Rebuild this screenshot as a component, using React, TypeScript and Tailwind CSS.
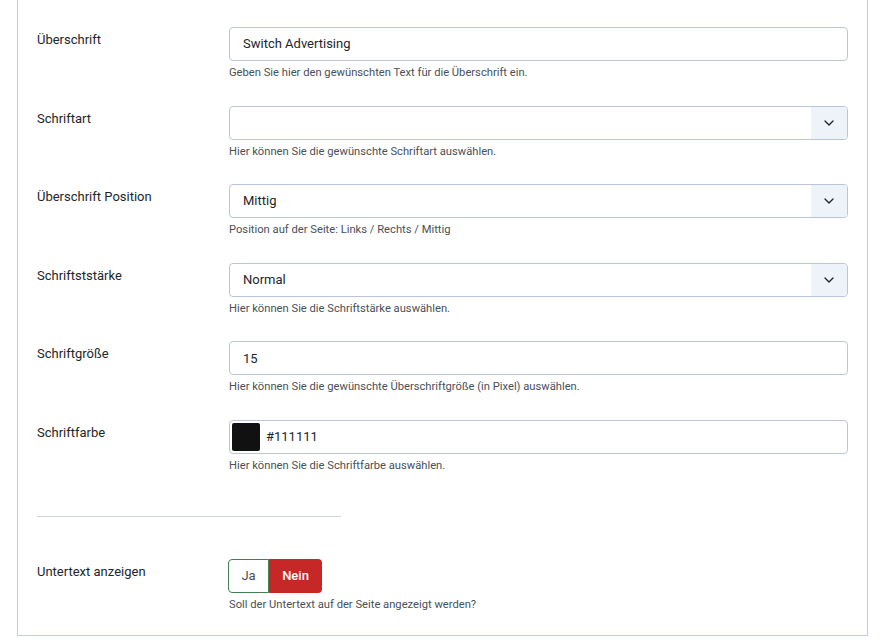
import { ChevronDown } from "lucide-react";

type Field =
  | { kind: "text"; label: string; value: string; hint: string }
  | { kind: "select"; label: string; value: string; hint: string }
  | { kind: "color"; label: string; value: string; hint: string };

const fields: Field[] = [
  {
    kind: "text",
    label: "Überschrift",
    value: "Switch Advertising",
    hint: "Geben Sie hier den gewünschten Text für die Überschrift ein.",
  },
  { kind: "select", label: "Schriftart", value: "", hint: "Hier können Sie die gewünschte Schriftart auswählen." },
  {
    kind: "select",
    label: "Überschrift Position",
    value: "Mittig",
    hint: "Position auf der Seite: Links / Rechts / Mittig",
  },
  { kind: "select", label: "Schriftststärke", value: "Normal", hint: "Hier können Sie die Schriftstärke auswählen." },
  {
    kind: "text",
    label: "Schriftgröße",
    value: "15",
    hint: "Hier können Sie die gewünschte Überschriftgröße (in Pixel) auswählen.",
  },
  { kind: "color", label: "Schriftfarbe", value: "#111111", hint: "Hier können Sie die Schriftfarbe auswählen." },
];

function Control({ field }: { field: Field }) {
  if (field.kind === "select") {
    return (
      <div className="flex h-[34px] items-stretch overflow-hidden rounded-[4px] border border-[#b9c6da] bg-white">
        <div className="flex flex-1 items-center px-[13px] text-[13px] text-[#22262a]">{field.value}</div>
        <div className="flex w-[36px] items-center justify-center bg-[#eef3fa]">
          <ChevronDown size={16} strokeWidth={2} className="text-[#22262a]" />
        </div>
      </div>
    );
  }
  if (field.kind === "color") {
    return (
      <div className="flex h-[34px] items-center rounded-[4px] border border-[#b9c6da] bg-white pl-[2px]">
        <div className="h-[28px] w-[28px] rounded-[2px] bg-[#111111]" />
        <span className="ml-[6px] text-[13px] text-[#22262a]">{field.value}</span>
      </div>
    );
  }
  return (
    <div className="flex h-[34px] items-center rounded-[4px] border border-[#b9c6da] bg-white px-[13px] text-[13px] text-[#22262a]">
      {field.value}
    </div>
  );
}

function Row({ label, hint, children }: { label: string; hint: string; children: React.ReactNode }) {
  return (
    <div className="flex">
      <div className="w-[192px] shrink-0 pt-[3px] text-[13px] text-[#22262a]">{label}</div>
      <div className="flex-1">
        {children}
        <div className="mt-[4px] text-[11.2px] leading-[15px] text-[#495057]">{hint}</div>
      </div>
    </div>
  );
}

export default function App() {
  return (
    <div className="min-h-screen bg-white" style={{ fontFamily: "Roboto, 'Noto Sans', sans-serif" }}>
      <div className="ml-[17px] mr-[14px] border-x border-b border-[#c1cde0] pl-[19px] pr-[19px] pt-[27px] pb-[23px]">
        <div className="flex flex-col gap-[25.6px]">
          {fields.map((f) => (
            <Row key={f.label} label={f.label} hint={f.hint}>
              <Control field={f} />
            </Row>
          ))}
        </div>

        <div className="mt-[43px] h-px w-[304px] bg-[#cdd3db]" />

        <div className="mt-[42px]">
          <Row label="Untertext anzeigen" hint="Soll der Untertext auf der Seite angezeigt werden?">
            <div className="ml-[-1px] flex h-[34px] w-fit text-[13px]">
              <div className="flex w-[41px] items-center justify-center rounded-l-[4px] border border-[#457d54] bg-white text-[#495057]">
                Ja
              </div>
              <div className="flex w-[53px] items-center justify-center rounded-r-[4px] bg-[#c52827] font-medium text-white">
                Nein
              </div>
            </div>
          </Row>
        </div>
      </div>
    </div>
  );
}
